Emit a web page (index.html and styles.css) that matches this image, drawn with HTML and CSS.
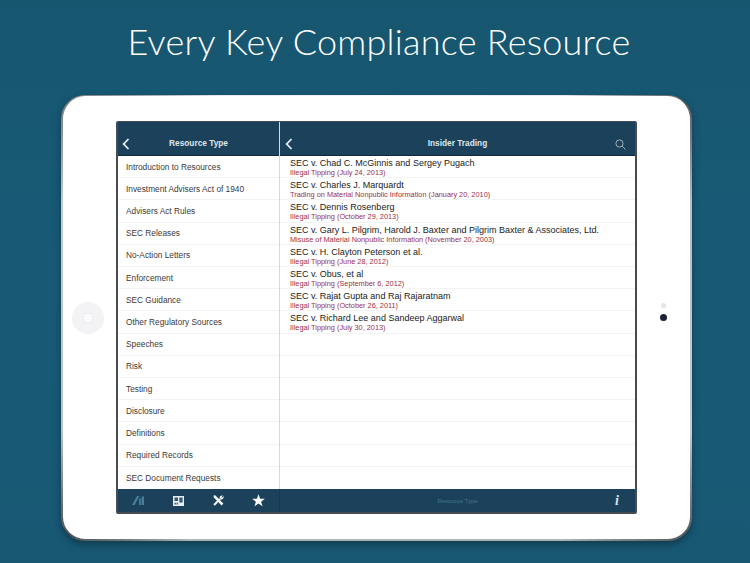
FILE: index.html
```html
<!DOCTYPE html>
<html lang="en">
<head>
  <meta charset="UTF-8">
  <title>Every Key Compliance Resource</title>
  <link rel="stylesheet" href="styles.css">
</head>
<body>

  <h1 class="headline">Every Key Compliance Resource</h1>

  <div class="tablet">
    <div class="bezel-left"><div class="home-btn"><span></span></div></div>

    <div class="screen">
      <div class="sidebar">
        <div class="bar top-bar">
          <svg class="back" width="8" height="12" viewBox="0 0 8 12"><path d="M6.5 1 1.7 6l4.8 5" fill="none" stroke="#e8eef2" stroke-width="1.8"/></svg>
          <span class="bar-title">Resource Type</span>
        </div>
        <ul class="side-list">
          <li>Introduction to Resources</li>
          <li>Investment Advisers Act of 1940</li>
          <li>Advisers Act Rules</li>
          <li>SEC Releases</li>
          <li>No-Action Letters</li>
          <li>Enforcement</li>
          <li>SEC Guidance</li>
          <li>Other Regulatory Sources</li>
          <li>Speeches</li>
          <li>Risk</li>
          <li>Testing</li>
          <li>Disclosure</li>
          <li>Definitions</li>
          <li>Required Records</li>
          <li>SEC Document Requests</li>
        </ul>
        <div class="tabs">
          <svg width="12" height="9" viewBox="0 0 12 9"><path d="M0 9 5 0H7.4L2.6 9z" fill="#44809b"/><path d="M7 2.4H8.8V9H7zM9.6 0.4H12V9H9.6z" fill="#44809b"/></svg>
          <svg width="11" height="10" viewBox="0 0 11 10"><rect width="11" height="10" fill="#e6ecf0"/><path d="M1.5 1.5H5V5H1.5zM6.3 1.5H9.6V6.6H6.3zM1.5 6.8H2.9V8.4H1.5zM3.6 6.8H5V8.4H3.6z" fill="#2f5a73"/></svg>
          <svg width="11" height="11" viewBox="0 0 11 11"><path d="M0.6 0.6 2.2 0.2 10.4 8.4 8.6 10.4 0.8 2.4z" fill="#f4f6f8"/><path d="M0.3 9.2 6.4 3.2 7.8 4.6 1.8 10.7z" fill="#f4f6f8"/><path d="M6.6 2.6C6.8 1 8.4 0 10 0.6L8.4 2.2 9 2.8 10.6 1.2C11.2 3 9.6 4.8 7.8 4.4z" fill="#f4f6f8"/></svg>
          <svg class="star" width="13" height="13" viewBox="0 0 14 13.4"><path d="M7 0 8.7 4.8 13.8 4.9 9.8 8 11.3 13 7 10 2.7 13 4.2 8 0.2 4.9 5.3 4.8z" fill="#fff"/></svg>
        </div>
      </div>

      <div class="main">
        <div class="bar top-bar">
          <svg class="back" width="8" height="12" viewBox="0 0 8 12"><path d="M6.5 1 1.7 6l4.8 5" fill="none" stroke="#e8eef2" stroke-width="1.8"/></svg>
          <span class="bar-title">Insider Trading</span>
          <svg class="search" width="11" height="11" viewBox="0 0 11 11"><circle cx="4.5" cy="4.5" r="3.6" fill="none" stroke="#a9bccb" stroke-width="0.9"/><path d="M7.2 7.2 10.5 10.5" stroke="#a9bccb" stroke-width="0.9"/></svg>
        </div>
        <ul class="case-list">
          <li><b>SEC v. Chad C. McGinnis and Sergey Pugach</b><i>Illegal Tipping (July 24, 2013)</i></li>
          <li><b>SEC v. Charles J. Marquardt</b><i>Trading on Material Nonpublic Information (January 20, 2010)</i></li>
          <li><b>SEC v. Dennis Rosenberg</b><i>Illegal Tipping (October 29, 2013)</i></li>
          <li><b>SEC v. Gary L. Pilgrim, Harold J. Baxter and Pilgrim Baxter &amp; Associates, Ltd.</b><i>Misuse of Material Nonpublic Information (November 20, 2003)</i></li>
          <li><b>SEC v. H. Clayton Peterson et al.</b><i>Illegal Tipping (June 28, 2012)</i></li>
          <li><b>SEC v. Obus, et al</b><i>Illegal Tipping (September 6, 2012)</i></li>
          <li><b>SEC v. Rajat Gupta and Raj Rajaratnam</b><i>Illegal Tipping (October 26, 2011)</i></li>
          <li><b>SEC v. Richard Lee and Sandeep Aggarwal</b><i>Illegal Tipping (July 30, 2013)</i></li>
          <li></li><li></li><li></li><li></li><li></li><li></li><li></li>
        </ul>
        <div class="bar bottom-bar">
          <span class="crumb">Resource Type</span>
          <span class="info">i</span>
        </div>
      </div>
    </div>

    <div class="bezel-right">
      <span class="dot dot-light"></span>
      <span class="dot dot-dark"></span>
    </div>
  </div>

</body>
</html>
```

FILE: styles.css
```css
* {
  box-sizing: border-box;
}

body {
  margin: 0;
  height: 563px;
  overflow: hidden;
  font-family: "Liberation Sans", Arial, sans-serif;
  background: linear-gradient(#17566f, #185a76 50%, #185873);
}

.headline {
  margin: 0;
  height: 95px;
  padding: 16px 0 0 8px;
  text-align: center;
  color: #fff;
  font-family: Lato, sans-serif;
  font-weight: 300;
  font-size: 36px;
  line-height: 50px;
  letter-spacing: 0.25px;
}

.tablet {
  display: grid;
  grid-template-columns: 53px 521px 1fr;
  width: 631px;
  height: 446px;
  margin-left: 61px;
  padding: 25px 0;
  border-radius: 24px;
  border: solid transparent;
  border-width: 1px 2px 2px;
  background:
    linear-gradient(#fff, #fff) padding-box,
    conic-gradient(#f2f3f4 0deg, #e8eaeb 40deg, #55595c 55deg, #b8bec2 70deg, #c4cacd 110deg, #55595c 125deg, #b0b4b7 140deg, #b0b4b7 220deg, #4c5054 235deg, #bcc3c7 250deg, #c4cbcf 290deg, #777c80 305deg, #e8eaeb 325deg, #f2f3f4 360deg) border-box;
  box-shadow: 0 4px 7px rgba(8, 35, 50, 0.5);
}

.bezel-left {
  display: flex;
  align-items: center;
  justify-content: center;
  padding-right: 3px;
}

.home-btn {
  display: flex;
  align-items: center;
  justify-content: center;
  width: 32px;
  height: 32px;
  border-radius: 50%;
  background: #f3f3f6;
}

.home-btn span {
  width: 10px;
  height: 10px;
  border-radius: 2px;
  background: #fbfbfb;
  border: 1px solid #ececef;
}

.bezel-right {
  display: flex;
  flex-direction: column;
  align-items: center;
  justify-content: center;
  gap: 6px;
  padding-bottom: 11px;
}

.dot {
  border-radius: 50%;
}

.dot-light {
  width: 5px;
  height: 5px;
  background: #e4e5ea;
}

.dot-dark {
  width: 7px;
  height: 7px;
  background: #1b2238;
}

.screen {
  display: grid;
  grid-template-columns: 162px 1fr;
  grid-template-rows: minmax(0, 1fr);
  height: 393px;
  background: #fff;
  border: 2px solid #454c52;
  border-top-width: 1px;
  border-radius: 2px;
}

.sidebar, .main {
  display: flex;
  flex-direction: column;
  min-width: 0;
  min-height: 0;
}

.sidebar {
  border-right: 1px solid #d5d9dc;
}

.bar {
  display: flex;
  align-items: center;
  position: relative;
  background: #1c425b;
  color: #fff;
}

.top-bar {
  flex: 0 0 33px;
  padding-top: 10px;
  border-bottom: 1px solid #10293b;
  justify-content: center;
}

.back {
  position: absolute;
  left: 4px;
  top: 16px;
}

.main .back {
  left: 5px;
}

.bar-title {
  color: #dfe7ec;
  font-size: 8.3px;
  font-weight: bold;
  line-height: 23px;
}

.search {
  position: absolute;
  right: 9px;
  top: 17px;
}

.side-list, .case-list {
  flex: 1;
  min-height: 0;
  display: grid;
  grid-template-rows: repeat(15, minmax(0, 1fr));
  margin: 0;
  padding: 0;
  list-style: none;
}

.side-list li {
  display: flex;
  align-items: center;
  padding-left: 8px;
  font-size: 8.3px;
  color: #3a3a3a;
  border-bottom: 1px solid #f3f3f3;
}

.side-list li:last-child {
  border-bottom: none;
}

.case-list li {
  padding: 1px 0 0 10px;
  border-bottom: 1px solid #f3f3f3;
  overflow: hidden;
}

.case-list li:last-child {
  border-bottom: none;
}

.case-list b {
  display: block;
  font-weight: normal;
  font-size: 9px;
  line-height: 12px;
  white-space: nowrap;
  color: #222;
}

.case-list i {
  display: block;
  font-style: normal;
  font-size: 7.35px;
  line-height: 8px;
  white-space: nowrap;
  color: #9e3044;
}

.tabs {
  flex: 0 0 23px;
  display: grid;
  grid-template-columns: repeat(4, 40px);
  justify-items: center;
  align-items: center;
  background: #1c425b;
}

.star {
  margin-left: 1px;
}

.bottom-bar {
  flex: 0 0 23px;
  justify-content: center;
  border-left: 1px solid #17384e;
  margin-left: -1px;
}

.crumb {
  font-size: 6px;
  padding-top: 1px;
  color: #3f7390;
}

.info {
  position: absolute;
  right: 16px;
  top: 3px;
  font-family: "Liberation Serif", serif;
  font-style: italic;
  font-weight: bold;
  font-size: 14px;
  line-height: 18px;
  color: #dbe4ea;
}
```
